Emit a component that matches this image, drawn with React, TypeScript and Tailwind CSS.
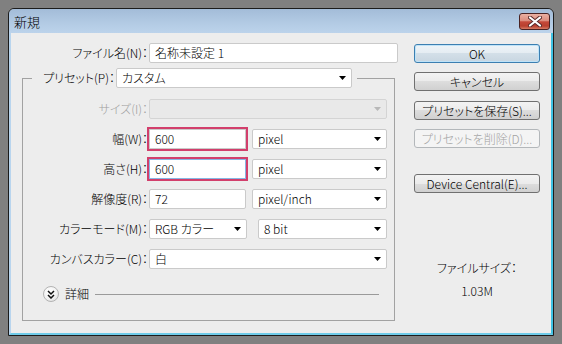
import React from 'react';

const Arrow = ({ disabled }: { disabled?: boolean }) => (
  <svg width="7" height="4" viewBox="0 0 7 4" className="shrink-0">
    <path d="M0 0h7L3.5 4z" fill={disabled ? '#b8b8b8' : '#000'} />
  </svg>
);

function Select({ value, className = '', disabled }: { value?: string; className?: string; disabled?: boolean }) {
  return (
    <div
      className={`flex h-[20px] items-center justify-between rounded-[2px] border pl-[5px] pr-[5px] ${
        disabled ? 'border-[#d4d4d4] bg-[#e9e9e9]' : 'border-[#cacaca] bg-white'
      } ${className}`}
    >
      <span>{value}</span>
      <Arrow disabled={disabled} />
    </div>
  );
}

function Field({ value, className = '' }: { value: string; className?: string }) {
  return (
    <div className={`flex h-[20px] items-center border bg-white pl-[5px] ${className}`}>
      {value}
    </div>
  );
}

function Row({ label, disabled, children }: { label: string; disabled?: boolean; children: React.ReactNode }) {
  return (
    <div className="flex h-[20px] items-center">
      <span className={`w-[125px] shrink-0 text-right ${disabled ? 'text-[#a0a0a0]' : 'text-black'}`}>{label}</span>
      <div className="ml-[1px] flex items-center">{children}</div>
    </div>
  );
}

function Button({ label, primary, disabled, className = '' }: { label: string; primary?: boolean; disabled?: boolean; className?: string }) {
  let look =
    'border-[#707070] bg-[linear-gradient(to_bottom,#f3f3f3_0%,#ebebeb_50%,#dddddd_50%,#d0d0d0_100%)] text-black';
  if (primary)
    look =
      'border-[#3c7fb1] bg-[linear-gradient(to_bottom,#eef4f8_0%,#e4ecf2_50%,#d3dfe8_50%,#c8d6e1_100%)] text-black shadow-[inset_0_0_0_1px_#bfe3f8]';
  if (disabled) look = 'border-[#b3b7ba] bg-[#f4f4f4] text-[#a3a3a3]';
  return (
    <div className={`flex h-[19px] w-[126px] items-center justify-center rounded-[3px] border ${look} ${className}`}>
      {label}
    </div>
  );
}

export default function App() {
  return (
    <div className="h-[344px] w-[562px] bg-[#808080] pl-[8px] pt-[8px] font-['Noto_Sans_CJK_JP',sans-serif] text-[12px] font-light leading-none text-black [font-feature-settings:'palt']">
      <div className="flex h-[328px] w-[546px] flex-col overflow-hidden rounded-t-[6px] border border-[#1c1c1c]">
        {/* タイトルバー */}
        <div className="flex h-[24px] shrink-0 items-start justify-between bg-[linear-gradient(to_bottom,#a3bcd8_0%,#b3cbe4_60%,#bcd3eb_100%)]">
          <span className="ml-[5px] mt-[6px] text-[13px]">新規</span>
          <div className="mr-[3px] mt-[4px] flex h-[17px] w-[31px] items-center justify-center rounded-[3px] border border-[#4a2323] bg-[linear-gradient(to_bottom,#eab0a2_0%,#dc8d7e_45%,#c5493a_52%,#b9402f_80%,#d67a63_100%)]">
            <svg width="14" height="11" viewBox="0 0 14 11">
              <path d="M2 1.5L12 9.5M12 1.5L2 9.5" stroke="#5a2a2a" strokeWidth="4" strokeLinecap="round" />
              <path d="M2 1.5L12 9.5M12 1.5L2 9.5" stroke="#fff" strokeWidth="2.2" strokeLinecap="round" />
            </svg>
          </div>
        </div>

        {/* 本体 */}
        <div className="flex flex-1 border-b-2 border-l-2 border-r-2 border-b-[#6fcbe8] border-l-[#b9d5ee] border-r-[#3fc2e4] bg-[#ededed] pl-[11px] pt-[10px]">
          {/* 左側フォーム */}
          <div className="w-[377px] shrink-0">
            <div className="flex h-[20px] items-center">
              <span className="w-[126px] shrink-0 text-right">ファイル名(N)：</span>
              <Field value="名称未設定 1" className="ml-[1px] w-[249px] rounded-[2px] border-[#cacaca]" />
            </div>

            <fieldset className="mt-[5px] w-[373px] border border-[#a2a2a2] pb-[18px] pt-[11px]">
              <legend className="ml-[9px] flex h-[20px] items-center pr-[5px]">
                <span className="w-[83px] text-right">プリセット(P)：</span>
                <Select value="カスタム" className="ml-[1px] w-[236px]" />
              </legend>

              <div className="flex flex-col gap-[10px]">
                <Row label="サイズ(I)：" disabled>
                  <Select disabled className="w-[238px]" />
                </Row>
                <Row label="幅(W)：">
                  <Field value="600" className="w-[97px] border-[#cacaca] outline-2 outline-[#d23f6c]" />
                  <Select value="pixel" className="ml-[6px] w-[135px]" />
                </Row>
                <Row label="高さ(H)：">
                  <Field value="600" className="w-[97px] border-[#86b6e4] outline-2 outline-[#d23f6c]" />
                  <Select value="pixel" className="ml-[6px] w-[135px]" />
                </Row>
                <Row label="解像度(R)：">
                  <Field value="72" className="w-[97px] rounded-[2px] border-[#cacaca]" />
                  <Select value="pixel/inch" className="ml-[6px] w-[135px]" />
                </Row>
                <Row label="カラーモード(M)：">
                  <Select value="RGB カラー" className="w-[98px]" />
                  <Select value="8 bit" className="ml-[11px] w-[129px]" />
                </Row>
                <Row label="カンバスカラー(C)：">
                  <Select value="白" className="w-[238px]" />
                </Row>
              </div>

              {/* 詳細 */}
              <div className="mt-[17px] flex h-[16px] items-center">
                <div className="ml-[20px] flex h-[16px] w-[16px] items-center justify-center rounded-full border border-[#b3b3b3] bg-[radial-gradient(circle_at_40%_35%,#ffffff_0%,#f2f2f2_55%,#d6d6d6_100%)]">
                  <svg width="8" height="9" viewBox="0 0 8 9">
                    <path d="M1 1l3 3 3-3M1 5l3 3 3-3" fill="none" stroke="#111" strokeWidth="1.5" />
                  </svg>
                </div>
                <span className="ml-[6px]">詳細</span>
                <div className="ml-[6px] mr-[15px] h-px flex-1 bg-[#9a9a9a]" />
              </div>
            </fieldset>
          </div>

          {/* 右側ボタン */}
          <div className="ml-[15px] flex w-[126px] flex-col items-center pt-[1px]">
            <Button label="OK" primary />
            <Button label="キャンセル" className="mt-[9px]" />
            <Button label="プリセットを保存(S)..." className="mt-[10px]" />
            <Button label="プリセットを削除(D)..." disabled className="mt-[9px]" />
            <Button label="Device Central(E)..." className="mt-[26px]" />
            <span className="mt-[69px]">ファイルサイズ：</span>
            <span className="mt-[11px]">1.03M</span>
          </div>
        </div>
      </div>
    </div>
  );
}
